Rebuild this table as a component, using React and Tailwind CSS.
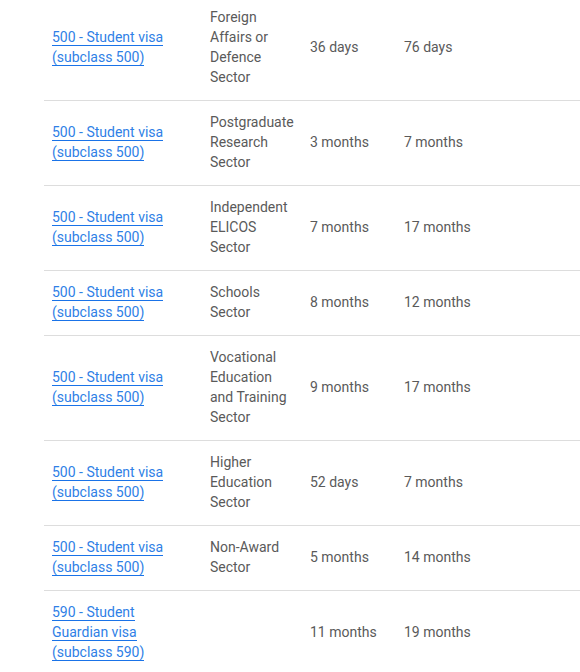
const rows = [
  { visa: "500 - Student visa (subclass 500)", sector: "Foreign Affairs or Defence Sector", p75: "36 days", p90: "76 days" },
  { visa: "500 - Student visa (subclass 500)", sector: "Postgraduate Research Sector", p75: "3 months", p90: "7 months" },
  { visa: "500 - Student visa (subclass 500)", sector: "Independent ELICOS Sector", p75: "7 months", p90: "17 months" },
  { visa: "500 - Student visa (subclass 500)", sector: "Schools Sector", p75: "8 months", p90: "12 months" },
  { visa: "500 - Student visa (subclass 500)", sector: "Vocational Education and Training Sector", p75: "9 months", p90: "17 months" },
  { visa: "500 - Student visa (subclass 500)", sector: "Higher Education Sector", p75: "52 days", p90: "7 months" },
  { visa: "500 - Student visa (subclass 500)", sector: "Non-Award Sector", p75: "5 months", p90: "14 months" },
  { visa: "590 - Student Guardian visa (subclass 590)", sector: "", p75: "11 months", p90: "19 months" },
]

export default function App() {
  return (
    <div className="w-[580px] h-[672px] overflow-hidden bg-white" style={{ fontFamily: "Roboto, 'Liberation Sans', sans-serif" }}>
      <div className="pl-[44px]">
        <table className="w-[560px] -mt-[4px] border-collapse text-[14px] leading-[20px] text-[#5a5a5a]">
          <colgroup>
            <col className="w-[158px]" />
            <col className="w-[100px]" />
            <col className="w-[94px]" />
            <col />
          </colgroup>
          <tbody>
            {rows.map((r, i) => (
              <tr key={i} className={i > 0 ? "border-t border-[#dddddd]" : ""}>
                <td className="align-middle pt-[11px] pb-[13px] px-2">
                  <a href="#" className="text-[#2f7fe6] border-b border-[#1a73e8] no-underline">{r.visa}</a>
                </td>
                <td className="align-middle pt-[11px] pb-[13px] px-2">{r.sector}</td>
                <td className="align-middle pt-[11px] pb-[13px] px-2">{r.p75}</td>
                <td className="align-middle pt-[11px] pb-[13px] px-2">{r.p90}</td>
              </tr>
            ))}
          </tbody>
        </table>
      </div>
    </div>
  )
}
